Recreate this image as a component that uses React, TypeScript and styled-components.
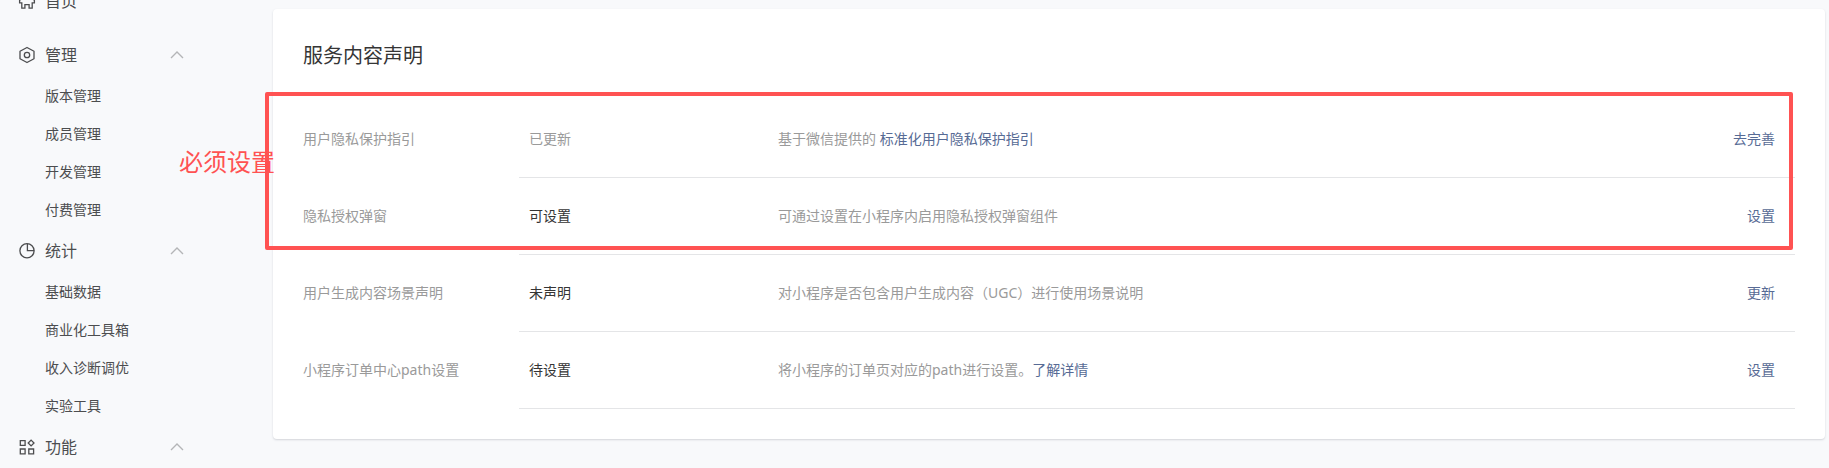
import React from "react";
import styled, { createGlobalStyle } from "styled-components";

const GlobalStyle = createGlobalStyle`
  *, *::before, *::after { box-sizing: border-box; }
  html, body { margin: 0; height: 100%; overflow: hidden; }
  body {
    background: #f8f9fb;
    color: #353535;
    font-family: "Noto Sans", "Noto Sans CJK SC", sans-serif;
    font-size: 14px;
    line-height: 20px;
  }
`;

const Page = styled.div`
  display: flex;
  align-items: flex-start;
`;

const Sidebar = styled.nav`
  flex: 0 0 273px;
  margin-top: -21px;
`;

const HomeLink = styled.a`
  display: flex;
  align-items: center;
  gap: 8px;
  height: 44px;
  margin-bottom: 10px;
  padding-left: 17px;
  color: #4c4d4f;
  font-size: 16px;
  text-decoration: none;
`;

const GroupButton = styled.button`
  display: flex;
  align-items: center;
  gap: 8px;
  width: 184px;
  height: 44px;
  padding: 0 0 0 17px;
  border: 0;
  background: none;
  color: #4c4d4f;
  font: inherit;
  font-size: 16px;
  cursor: pointer;
`;

const Icon = styled.svg`
  flex: none;
  width: 20px;
  height: 20px;
  fill: none;
  stroke: #4c4d4f;
  stroke-width: 1.3;
`;

const Chevron = styled.svg`
  width: 14px;
  height: 8px;
  margin-left: auto;
  fill: none;
  stroke: #b4b5b7;
  stroke-width: 1.4;
`;

const ItemList = styled.ul`
  margin: 0;
  padding: 0;
  list-style: none;
`;

const ItemLink = styled.a`
  display: flex;
  align-items: center;
  height: 38px;
  padding-left: 45px;
  color: #4c4d4f;
  text-decoration: none;
`;

const Card = styled.main`
  position: relative;
  flex: 1;
  margin: 9px 4px 0 0;
  padding: 31px 30px 30px;
  border-radius: 4px;
  background: #fff;
  box-shadow: 0 1px 2px rgba(140, 145, 155, 0.35);
`;

const Title = styled.h1`
  margin: 0 0 29px;
  font-size: 20px;
  font-weight: 400;
  line-height: 32px;
`;

const Table = styled.table`
  width: 100%;
  border-collapse: separate;
  border-spacing: 0;
  table-layout: fixed;
`;

const LabelCell = styled.th`
  width: 216px;
  padding: 0;
  border-bottom: 1px solid transparent;
  color: #9a9a9a;
  font-weight: 400;
  text-align: left;
`;

const Cell = styled.td<{ $muted?: boolean; $width?: number }>`
  width: ${(p) => (p.$width ? `${p.$width}px` : "auto")};
  height: 77px;
  padding: 0 0 0 10px;
  border-bottom: 1px solid #e4e5e7;
  color: ${(p) => (p.$muted ? "#9a9a9a" : "#353535")};
`;

const ActionCell = styled(Cell)`
  padding: 0 20px 0 0;
  text-align: right;
`;

const TextLink = styled.a`
  color: #576b95;
  text-decoration: none;
`;

const Highlight = styled.div`
  position: absolute;
  top: 83px;
  right: 32px;
  left: -8px;
  height: 158px;
  border: 4px solid #ff5252;
  border-radius: 2px;
  pointer-events: none;
`;

const Note = styled.span`
  position: absolute;
  top: 48px;
  left: -90px;
  color: #ff5252;
  font-size: 24px;
  line-height: 36px;
  white-space: nowrap;
`;

const HomeIcon = () => (
  <Icon viewBox="0 0 20 20" aria-hidden="true">
    <path d="M10 2.4 2.6 9.4v2.4h2.2v5.4h3.1v-3.6h4.2v3.6h3.1v-5.4h2.2V9.4z" />
  </Icon>
);

const ManageIcon = () => (
  <Icon viewBox="0 0 20 20" aria-hidden="true">
    <path d="M10 2.5 17 6.3v7.4L10 17.5 3 13.7V6.3z" strokeLinejoin="round" />
    <circle cx="10" cy="10" r="2.7" />
  </Icon>
);

const StatsIcon = () => (
  <Icon viewBox="0 0 20 20" aria-hidden="true">
    <circle cx="10" cy="9.8" r="7.1" />
    <path d="M10.4 2.7v6.9h6.7" />
  </Icon>
);

const FeatureIcon = () => (
  <Icon viewBox="0 0 20 20" aria-hidden="true">
    <path d="M3.3 3.6h4.8v4.8H3.3zM3.3 12h4.8v4.8H3.3zM11.8 12h4.8v4.8h-4.8zM14.1 3.1 17 6l-2.9 2.9L11.2 6z" />
  </Icon>
);

const groups = [
  { name: "管理", icon: <ManageIcon />, items: ["版本管理", "成员管理", "开发管理", "付费管理"] },
  { name: "统计", icon: <StatsIcon />, items: ["基础数据", "商业化工具箱", "收入诊断调优", "实验工具"] },
  { name: "功能", icon: <FeatureIcon />, items: [] },
];

const rows = [
  {
    label: "用户隐私保护指引",
    status: "已更新",
    done: true,
    text: <>基于微信提供的 <TextLink href="#guide">标准化用户隐私保护指引</TextLink></>,
    action: "去完善",
  },
  { label: "隐私授权弹窗", status: "可设置", text: "可通过设置在小程序内启用隐私授权弹窗组件", action: "设置" },
  {
    label: "用户生成内容场景声明",
    status: "未声明",
    text: "对小程序是否包含用户生成内容（UGC）进行使用场景说明",
    action: "更新",
  },
  {
    label: "小程序订单中心path设置",
    status: "待设置",
    text: <>将小程序的订单页对应的path进行设置。<TextLink href="#detail">了解详情</TextLink></>,
    action: "设置",
  },
];

export default function App() {
  return (
    <>
      <GlobalStyle />
      <Page lang="zh-CN">
        <Sidebar>
          <HomeLink href="#home"><HomeIcon />首页</HomeLink>
          {groups.map((group) => (
            <section key={group.name}>
              <GroupButton type="button" aria-expanded="true">
                {group.icon}
                {group.name}
                <Chevron viewBox="0 0 14 8" aria-hidden="true"><path d="M1 7l6-6 6 6" /></Chevron>
              </GroupButton>
              <ItemList>
                {group.items.map((item) => (
                  <li key={item}><ItemLink href="#item">{item}</ItemLink></li>
                ))}
              </ItemList>
            </section>
          ))}
        </Sidebar>
        <Card>
          <Title>服务内容声明</Title>
          <Table>
            <tbody>
              {rows.map((row) => (
                <tr key={row.label}>
                  <LabelCell scope="row">{row.label}</LabelCell>
                  <Cell $width={249} $muted={row.done}>{row.status}</Cell>
                  <Cell $muted>{row.text}</Cell>
                  <ActionCell $width={120}><TextLink href="#action">{row.action}</TextLink></ActionCell>
                </tr>
              ))}
            </tbody>
          </Table>
          <Highlight><Note>必须设置</Note></Highlight>
        </Card>
      </Page>
    </>
  );
}
